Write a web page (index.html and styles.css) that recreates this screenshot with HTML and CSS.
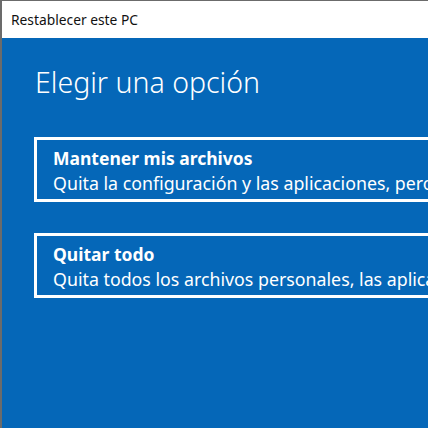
FILE: index.html
```html
<!DOCTYPE html>
<html lang="es">
<head>
  <meta charset="UTF-8" />
  <meta name="viewport" content="width=device-width, initial-scale=1.0"/>
  <title>Restablecer este PC</title>
  <link rel="stylesheet" href="styles.css">
</head>
<body>
  <div class="window">
    <div class="titlebar">Restablecer este PC</div>
    <div class="panel">
      <h1>Elegir una opción</h1>
      <div class="option">
        <div class="option-title">Mantener mis archivos</div>
        <div class="option-desc">Quita la configuración y las aplicaciones, pero conserva los archivos personales.</div>
      </div>
      <div class="option">
        <div class="option-title">Quitar todo</div>
        <div class="option-desc">Quita todos los archivos personales, las aplicaciones y la configuración.</div>
      </div>
    </div>
  </div>
</body>
</html>
```

FILE: styles.css
```css
html, body {
  margin: 0;
  height: 100%;
  overflow: hidden;
}
body {
  font-family: 'Noto Sans', 'Open Sans', sans-serif;
  background: #6b6b6b;
}
.window {
  height: 100%;
  margin-left: 2px;
  margin-top: 1px;
  display: flex;
  flex-direction: column;
}
.titlebar {
  height: 37px;
  background: #fff;
  color: #111;
  font-size: 13.8px;
  line-height: 37px;
  padding-left: 9px;
}
.panel {
  flex: 1;
  background: #0567b8;
  color: #fff;
  padding: 24px 0 0 32px;
  overflow: hidden;
}
h1 {
  margin: 0 0 35px 1px;
  font-weight: 300;
  font-size: 28.5px;
  line-height: 40px;
}
.option {
  width: 460px;
  border: 3px solid #fff;
  padding: 6px 0 3px 16px;
  margin-bottom: 31px;
  white-space: nowrap;
}
.option-title {
  font-weight: 700;
  font-size: 17.5px;
  line-height: 24px;
}
.option-desc {
  font-size: 17.8px;
  line-height: 26px;
}
```
